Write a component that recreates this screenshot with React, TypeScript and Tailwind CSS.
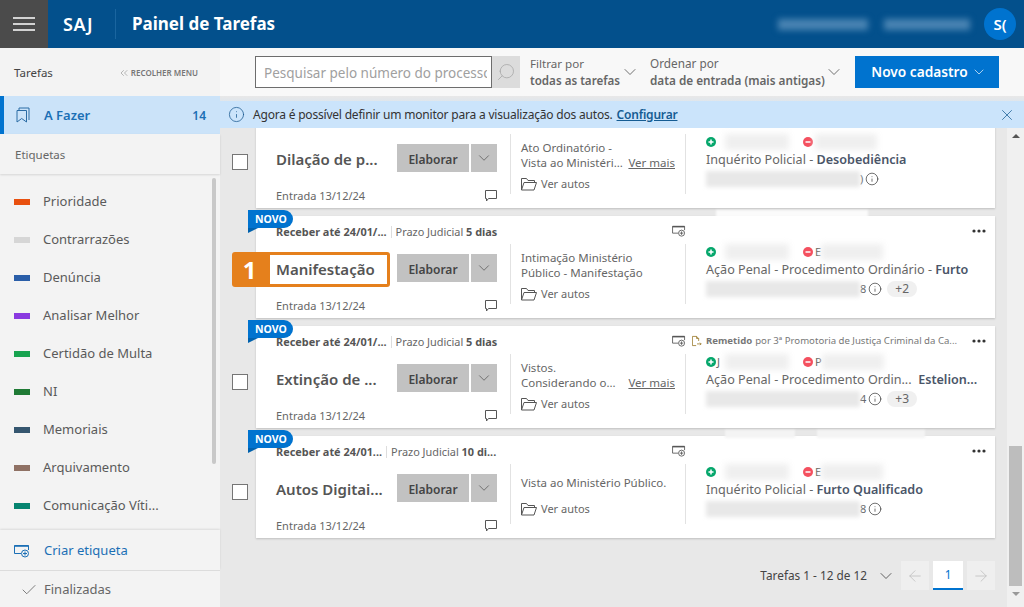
import { ArrowLeft, ArrowRight, Check, ChevronDown, ChevronsLeft, Info, Search, X } from 'lucide-react'

const LABELS = [
  { name: 'Prioridade', color: 'bg-[#e8500f]' },
  { name: 'Contrarrazões', color: 'bg-[#d6d6d6]' },
  { name: 'Denúncia', color: 'bg-[#2a5ea8]' },
  { name: 'Analisar Melhor', color: 'bg-[#8a3ae0]' },
  { name: 'Certidão de Multa', color: 'bg-[#17a34f]' },
  { name: 'NI', color: 'bg-[#1f7a35]' },
  { name: 'Memoriais', color: 'bg-[#35566f]' },
  { name: 'Arquivamento', color: 'bg-[#8f7164]' },
  { name: 'Comunicação Víti...', color: 'bg-[#068470]' },
]

type Task = {
  title: string
  checkbox: boolean
  novo: boolean
  deadline: string
  prazo: string
  lines: string[]
  verMais: boolean
  remetido: boolean
  partyA: string
  partyB: string
  classe: string
  assunto: string
  numEnd: string
  extra?: string
}

const TASKS: Task[] = [
  {
    // primeira linha do cartão fica rolada para baixo do aviso
    title: 'Dilação de p...', checkbox: true, novo: false, deadline: '', prazo: '',
    lines: ['Ato Ordinatório -', 'Vista ao Ministéri...'], verMais: true, remetido: false,
    partyA: '', partyB: '',
    classe: 'Inquérito Policial - ', assunto: 'Desobediência', numEnd: ')',
  },
  {
    title: 'Manifestação', checkbox: false, novo: true, deadline: 'Receber até 24/01/...', prazo: '5 dias',
    lines: ['Intimação Ministério', 'Público - Manifestação'], verMais: false, remetido: false,
    partyA: '', partyB: 'E',
    classe: 'Ação Penal - Procedimento Ordinário - ', assunto: 'Furto', numEnd: '8', extra: '+2',
  },
  {
    title: 'Extinção de ...', checkbox: true, novo: true, deadline: 'Receber até 24/01/...', prazo: '5 dias',
    lines: ['Vistos.', 'Considerando o...'], verMais: true, remetido: true,
    partyA: 'J', partyB: 'P',
    classe: 'Ação Penal - Procedimento Ordin...  ', assunto: 'Estelion...', numEnd: '4', extra: '+3',
  },
  {
    title: 'Autos Digitai...', checkbox: true, novo: true, deadline: 'Receber até 24/01...', prazo: '10 di...',
    lines: ['Vista ao Ministério Público.'], verMais: false, remetido: false,
    partyA: '', partyB: 'E',
    classe: 'Inquérito Policial - ', assunto: 'Furto Qualificado', numEnd: '8',
  },
]

function TagAdd({ className }: { className: string }) {
  return (
    <svg viewBox="0 0 16 14" fill="none" stroke="currentColor" className={className}>
      <path d="M.5 9.5V1.5h14V6" />
      <path d="M.5 2h14" strokeWidth="1.6" />
      <path d="M.5 9.5H7" />
      <circle cx="11" cy="9.5" r="3.5" />
      <path d="M11 7.5v4M9 9.5h4" />
    </svg>
  )
}

function Folder() {
  return (
    <svg viewBox="0 0 16 14" fill="none" stroke="#555" className="h-[14px] w-4 shrink-0">
      <path d="M.5 13V1.5h5l1.5 2h6.500v2" />
      <path d="M.5 13l2.500-7.500h12.500L13 13z" />
    </svg>
  )
}

function Comment() {
  return (
    <svg viewBox="0 0 12 12" fill="none" stroke="#555" className="h-3 w-3">
      <path d="M.5.5h11v8H3.500L1.500 11V8.500h-1z" />
    </svg>
  )
}

function PartyDot({ kind }: { kind: 'plus' | 'minus' }) {
  return (
    <svg viewBox="0 0 10 10" className="h-[10px] w-[10px] shrink-0">
      <circle cx="5" cy="5" r="5" fill={kind === 'plus' ? '#06a76c' : '#f4505f'} />
      <path d={kind === 'plus' ? 'M2.500 5h5M5 2.500v5' : 'M2.500 5h5'} stroke="#fff" strokeWidth="1.500" />
    </svg>
  )
}

function Dots() {
  return (
    <svg viewBox="0 0 14 4" fill="#333" className="h-1 w-[14px]">
      <circle cx="2" cy="2" r="1.600" />
      <circle cx="7" cy="2" r="1.600" />
      <circle cx="12" cy="2" r="1.600" />
    </svg>
  )
}

function TaskCard({ task }: { task: Task }) {
  return (
    <div className="flex items-center">
      <div className="mt-[10px] h-4 w-[36px] shrink-0 pl-3">
        {task.checkbox && <div className="h-4 w-4 border border-[#757575] bg-white" />}
      </div>
      <div className="relative flex h-[102px] w-[739px] bg-white pl-5 shadow-[0_1px_2px_rgba(0,0,0,0.18)]">
        {task.novo && (
          <div className="absolute -left-2 -top-[6px]">
            <div className="flex h-[18px] w-[45px] items-center rounded-r-full rounded-tl-[3px] bg-[#0073cf] pl-[7px] text-[10.500px] font-bold leading-none text-white">
              NOVO
            </div>
            <div className="h-0 w-0 border-b-[5px] border-l-[10px] border-b-transparent border-l-[#0061ad]" />
          </div>
        )}

        {/* left */}
        <div className="flex w-[221px] shrink-0 flex-col pt-[9px]">
          <div className="flex h-[14px] items-center whitespace-nowrap text-[10.900px] leading-none text-[#666]">
            {task.deadline && (
              <>
                <span className="font-bold text-[#555]">{task.deadline}</span>
                <span className="mx-[4px] h-3 border-l border-[#ddd]" />
                <span>Prazo Judicial <b className="text-[#555]">{task.prazo}</b></span>
              </>
            )}
          </div>
          <div className="mt-[15px] flex h-[28px] items-center">
            <span className="w-[121px] whitespace-nowrap pt-[2px] text-[15px] font-semibold text-[#555]">{task.title}</span>
            <span className="flex h-[28px] w-[72px] items-center justify-center bg-[#c2c2c2] pt-[3px] text-[12px] font-semibold text-[#444]">Elaborar</span>
            <span className="ml-[2px] flex h-[28px] w-[26px] items-center justify-center bg-[#c2c2c2]">
              <ChevronDown size={18} strokeWidth={1} className="text-[#555]" />
            </span>
          </div>
          <div className="mt-[17px] flex items-center justify-between text-[11px] leading-[14px] text-[#666]">
            <span>Entrada 13/12/24</span>
            <Comment />
          </div>
        </div>

        {/* right */}
        <div className="ml-[13px] flex min-w-0 flex-1 flex-col">
          <div className="flex h-[28px] items-start pl-[162px] pr-[9px] pt-[9px]">
            {task.novo && (
              <>
                <TagAdd className="h-[12px] w-[14px] shrink-0 text-[#555]" />
                {task.remetido && (
                  <div className="ml-[6px] flex items-center whitespace-nowrap text-[9.600px] leading-3 text-[#777]">
                    <svg viewBox="0 0 12 12" fill="none" stroke="#9a7b2c" className="mr-[4px] h-3 w-[10px]">
                      <path d="M5 11.500H.5V.5h5L8 3v3M5.500.5V3H8M6 9.500h5M9.500 8l1.500 1.500L9.500 11" />
                    </svg>
                    <b className="mr-[3px]">Remetido</b> por 3ª Promotoria de Justiça Criminal da Ca...
                  </div>
                )}
                <div className="ml-auto pt-[4px]"><Dots /></div>
              </>
            )}
          </div>
          <div className="flex h-[60px]">
            <div className="w-[175px] shrink-0 border-l border-[#e2e2e2] px-[10px] text-[11.500px] leading-[15px] text-[#666]">
              <div className={task.lines.length === 1 ? 'pt-[11px]' : 'pt-[6px]'}>
                {task.lines.map((line, i) => (
                  <div key={line} className="flex justify-between whitespace-nowrap">
                    <span>{line}</span>
                    {task.verMais && i === 1 && <span className="underline">Ver mais</span>}
                  </div>
                ))}
              </div>
              <div className={`flex items-center gap-1 ${task.lines.length === 1 ? 'mt-[11px]' : 'mt-[6px]'}`}>
                <Folder />
                <span className="text-[11px]">Ver autos</span>
              </div>
            </div>
            <div className="min-w-0 flex-1 border-l border-[#e2e2e2] pl-5 text-[12.600px] text-[#666]">
              <div className="flex h-4 items-center">
                <PartyDot kind="plus" />
                <span className="ml-[1px] w-[4px] text-[11px]">{task.partyA}</span>
                <div className="ml-[4px] h-[16px] w-[64px] bg-[#efefef] blur-[3px]" />
                <div className="w-[14px]" />
                <PartyDot kind="minus" />
                <span className="ml-[2px] text-[11px]">{task.partyB}</span>
                <div className="h-[16px] w-[62px] bg-[#efefef] blur-[3px]" />
              </div>
              <div className="mt-[1px] whitespace-pre leading-[17px]">
                {task.classe}
                <span className="font-semibold text-[#4a5568]">{task.assunto}</span>
              </div>
              <div className="mt-[2px] flex h-[18px] items-center">
                <div className="h-[16px] w-[154px] bg-[#e8e8e8] blur-[2px]" />
                <span className="text-[11px]">{task.numEnd}</span>
                <Info size={14} strokeWidth={1.2} className="ml-[2px] text-[#333]" />
                {task.extra && (
                  <span className="ml-[5px] rounded-full bg-[#f0f0f0] px-2 text-[12px] leading-[16px] text-[#666]">{task.extra}</span>
                )}
              </div>
            </div>
          </div>
        </div>

        {/* passo 1 em destaque */}
        {task.title === 'Manifestação' && (
          <div className="absolute -left-6 top-9 flex h-[35px] w-[158px]">
            <div className="flex w-[35px] items-center justify-center rounded-l-[3px] bg-[#e5801c] text-[24px] font-bold text-white">1</div>
            <div className="flex-1 rounded-r-[3px] border-[3px] border-[#e5801c]" />
          </div>
        )}
      </div>
    </div>
  )
}

export default function App() {
  return (
    <div className="flex h-screen w-full flex-col overflow-hidden bg-[#e8e8e8] font-['Noto_Sans','Open_Sans',sans-serif] text-[#555]">
      {/* Header */}
      <header className="flex h-12 shrink-0 items-center bg-[#03508c] text-white">
        <div className="flex h-12 w-12 items-center justify-center bg-[#4b4b4b]">
          <svg viewBox="0 0 22 14" fill="none" stroke="currentColor" strokeWidth="1.300" className="h-[14px] w-[22px]">
            <path d="M0 1h22M0 7h22M0 13h22" />
          </svg>
        </div>
        <span className="ml-[15px] w-[37px] text-[18px] font-semibold tracking-[0.5px]">SAJ</span>
        <div className="ml-[15px] h-[30px] border-l border-[#1a659f]" />
        <h1 className="ml-4 text-[17px] font-bold">Painel de Tarefas</h1>
        <div className="ml-auto flex items-center pr-2">
          <div className="h-[11px] w-[90px] bg-[#4a84b3] blur-[3px]" />
          <div className="ml-[16px] h-[11px] w-[86px] bg-[#4a84b3] blur-[3px]" />
          <div className="ml-[14px] flex h-8 w-8 items-center justify-center rounded-full bg-[#0073cf] text-[15px] font-semibold">S(</div>
        </div>
      </header>

      <div className="flex min-h-0 flex-1">
        {/* Sidebar */}
        <aside className="flex w-[220px] shrink-0 flex-col bg-[#f3f3f3]">
          <div className="flex h-12 items-center justify-between pl-[14px] pr-[22px] pt-[2px]">
            <span className="text-[11.500px] text-[#444]">Tarefas</span>
            <span className="flex items-center text-[8px] font-semibold text-[#777]">
              <ChevronsLeft size={12} strokeWidth={1} className="mr-[1px]" />
              RECOLHER MENU
            </span>
          </div>
          <div className="flex h-[38px] items-center border-l-4 border-[#0073cf] bg-[#cbe3f9] pl-3 pr-[14px] text-[#1b6fb5]">
            <svg viewBox="0 0 14 16" fill="none" stroke="currentColor" className="h-4 w-[14px] text-[#2b6ca5]">
              <path d="M3 3.500V1h10v12" />
              <path d="M1 3.500h9.500V15L5.700 11.500 1 15z" />
            </svg>
            <span className="ml-[14px] pt-[2px] text-[13px] font-semibold">A Fazer</span>
            <span className="ml-auto pt-[2px] text-[12px] font-semibold">14</span>
          </div>
          <div className="flex h-10 items-center pl-[15px] pt-[2px] text-[11.500px] text-[#666] shadow-[0_1px_2px_rgba(0,0,0,0.12)]">Etiquetas</div>
          <div className="relative min-h-0 flex-1 overflow-hidden">
            <ul className="pt-[9px]">
              {LABELS.map((label) => (
                <li key={label.name} className="flex h-[38px] items-center pl-[14px] text-[13px] text-[#5a5a5a]">
                  <span className={`h-[6px] w-4 ${label.color}`} />
                  <span className="ml-[13px] whitespace-nowrap">{label.name}</span>
                </li>
              ))}
            </ul>
            <div className="absolute left-[212px] top-[4px] h-[286px] w-1 rounded-full bg-[#c8c8c8]" />
          </div>
          <div className="flex h-[40px] items-center pl-[14px] pt-[2px] text-[13px] text-[#1b6fb5] shadow-[0_-1px_2px_rgba(0,0,0,0.1)]">
            <TagAdd className="h-[14px] w-4 text-[#1b6fb5]" />
            <span className="ml-[14px]">Criar etiqueta</span>
          </div>
          <div className="flex h-[37px] items-center border-t border-[#dcdcdc] pl-5 pt-[2px] text-[13px] text-[#666]">
            <Check size={18} strokeWidth={1} className="text-[#555]" />
            <span className="ml-[6px]">Finalizadas</span>
          </div>
        </aside>

        {/* Main */}
        <main className="flex min-w-0 flex-1 flex-col">
          <div className="flex h-12 shrink-0 items-center bg-[#f8f8f8] pl-[35px]">
            <input
              readOnly
              placeholder="Pesquisar pelo número do processo"
              className="h-8 w-[237px] border border-[#6d6d6d] bg-white pl-2 pr-1 pt-[2px] text-[13.500px] placeholder:text-[#a0a0a0]"
            />
            <div className="flex h-8 w-7 items-center justify-center bg-[#dcdcdc]">
              <Search size={20} strokeWidth={1} className="-scale-x-100 text-[#aaa]" />
            </div>
            <div className="ml-[10px] w-[92px] text-[11.600px] leading-[17px] text-[#666]">
              <div>Filtrar por</div>
              <div className="whitespace-nowrap font-semibold">todas as tarefas</div>
            </div>
            <ChevronDown size={20} strokeWidth={1} className="-mx-[2px] shrink-0 text-[#555]" />
            <div className="ml-[12px] w-[176px] text-[11.750px] leading-[17px] text-[#666]">
              <div>Ordenar por</div>
              <div className="whitespace-nowrap font-semibold">data de entrada (mais antigas)</div>
            </div>
            <ChevronDown size={20} strokeWidth={1} className="-mx-[2px] shrink-0 text-[#555]" />
            <div className="ml-[13px] flex h-8 w-[144px] items-center justify-center gap-[3px] bg-[#0073cf] pl-1 text-[13.700px] font-semibold text-white">
              Novo cadastro
              <ChevronDown size={16} strokeWidth={1} />
            </div>
          </div>
          <div className="h-[5px] shrink-0 bg-gradient-to-b from-[#e8e8e8] to-[#e0e6ec]" />
          <div className="flex h-[27px] shrink-0 items-center bg-[#cbe4fb] px-2 text-[12px] tracking-[-0.2px] text-[#333]">
            <Info size={17} strokeWidth={1.1} className="text-[#1d5c92]" />
            <span className="ml-2">Agora é possível definir um monitor para a visualização dos autos.</span>
            <span className="ml-1 font-semibold text-[#155c93] underline">Configurar</span>
            <X size={18} strokeWidth={1} className="ml-auto text-[#155c93]" />
          </div>

          <div className="relative flex min-h-0 flex-1">
            <div className="min-w-0 flex-1 overflow-hidden">
              <div className="-mt-[22px] flex flex-col gap-2">
                {TASKS.map((task) => (
                  <TaskCard key={task.title} task={task} />
                ))}
              </div>
              <div className="mt-[23px] flex h-[29px] items-center justify-end pr-[12px] text-[11.800px] text-[#444]">
                <span>Tarefas 1 - 12 de 12</span>
                <ChevronDown size={20} strokeWidth={1} className="ml-[9px] text-[#444]" />
                <span className="ml-[5px] flex h-[29px] w-7 items-center justify-center bg-[#efefef]">
                  <ArrowLeft size={18} strokeWidth={1} className="text-[#bbb]" />
                </span>
                <span className="ml-1 flex h-[29px] w-[30px] items-center justify-center border-b-2 border-[#0073cf] bg-white text-[#0073cf]">1</span>
                <span className="ml-1 flex h-[29px] w-7 items-center justify-center bg-[#efefef]">
                  <ArrowRight size={18} strokeWidth={1} className="text-[#bbb]" />
                </span>
              </div>
            </div>
            {/* scrollbar */}
            <div className="flex w-[17px] shrink-0 flex-col items-center bg-[#f0f0f0] pt-[6px]">
              <div className="h-0 w-0 border-x-[4px] border-b-[4px] border-x-transparent border-b-[#555]" />
              <div className="mt-[308px] h-[140px] w-[13px] bg-[#bdbdbd]" />
              <div className="mt-[6px] h-0 w-0 border-x-[4px] border-t-[4px] border-x-transparent border-t-[#999]" />
            </div>
            {/* tarjas de anonimização */}
            <div className="absolute left-[496px] top-[82px] h-[8px] w-[152px] bg-white/80 blur-[1px]" />
            <div className="absolute left-[505px] top-[302px] h-[8px] w-[70px] bg-[#f4f4f4] blur-[1px]" />
            <div className="absolute left-[597px] top-[302px] h-[8px] w-[108px] bg-[#f4f4f4] blur-[1px]" />
          </div>
        </main>
      </div>
    </div>
  )
}
